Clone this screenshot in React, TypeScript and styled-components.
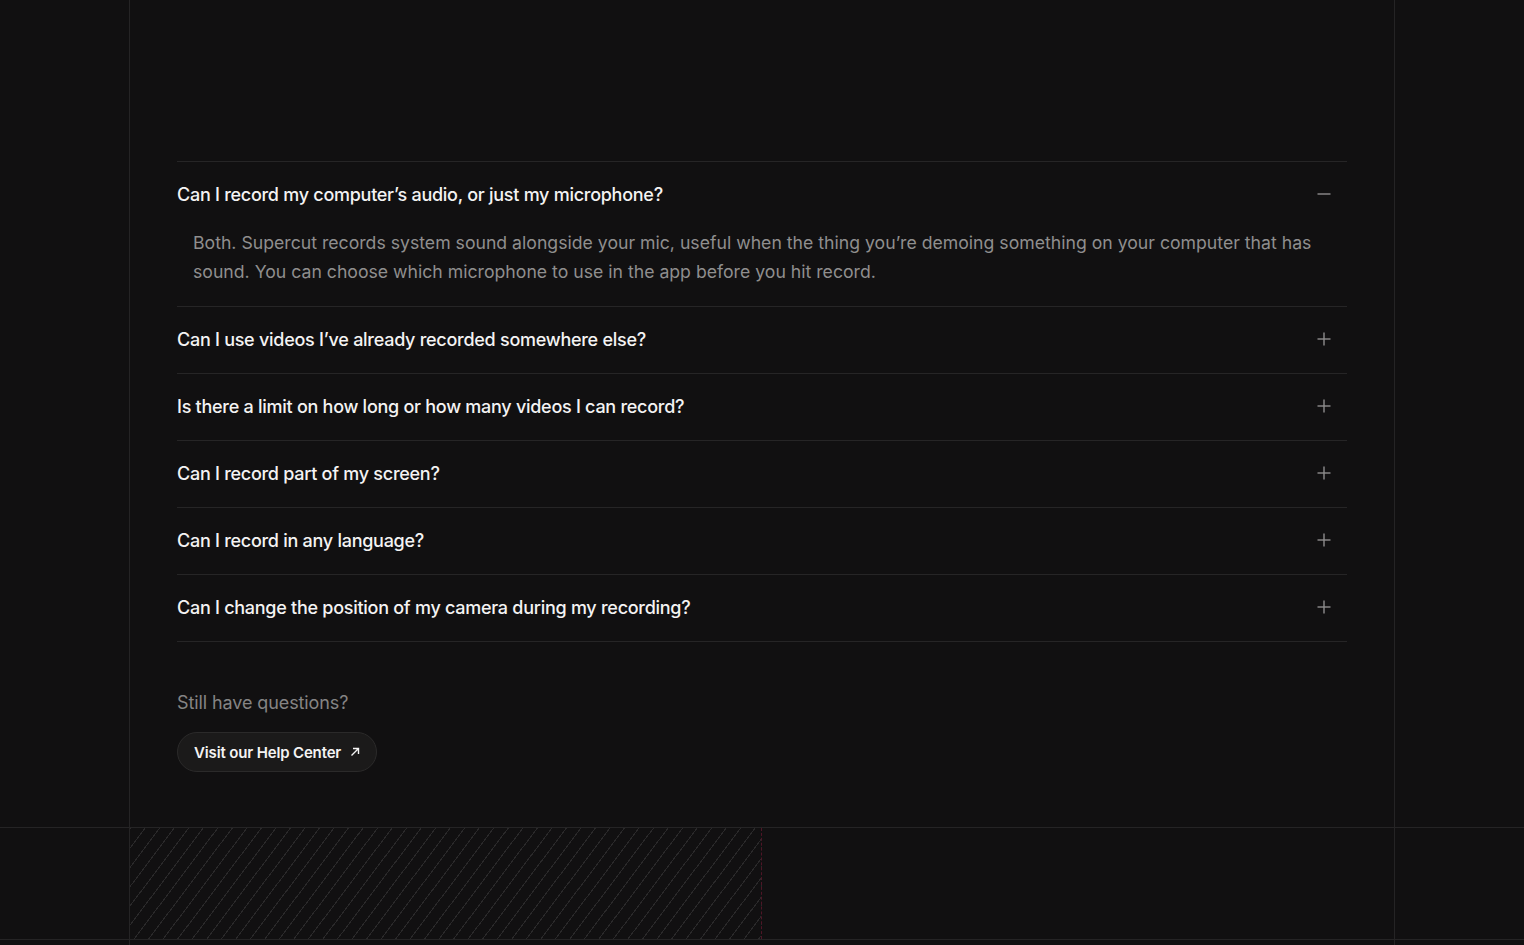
import styled, { createGlobalStyle } from "styled-components";

const faqs = [
  {
    q: "Can I record my computer’s audio, or just my microphone?",
    a: "Both. Supercut records system sound alongside your mic, useful when the thing you’re demoing something on your computer that has sound. You can choose which microphone to use in the app before you hit record.",
    open: true,
  },
  { q: "Can I use videos I’ve already recorded somewhere else?" },
  { q: "Is there a limit on how long or how many videos I can record?" },
  { q: "Can I record part of my screen?" },
  { q: "Can I record in any language?" },
  { q: "Can I change the position of my camera during my recording?" },
];

const GlobalStyle = createGlobalStyle`
  *, *::before, *::after {
    box-sizing: border-box;
  }
  html, body {
    margin: 0;
    background: #111011;
    font-family: Inter, "Noto Sans", sans-serif;
    -webkit-font-smoothing: antialiased;
  }
`;

const Page = styled.div`
  height: 945px;
  display: flex;
  flex-direction: column;
  overflow: hidden;
`;

const Band = styled.section`
  border-bottom: 1px solid #252425;
`;

const Frame = styled.div`
  width: 1266px;
  margin: 0 auto;
  border-left: 1px solid #252425;
  border-right: 1px solid #252425;
`;

const FaqFrame = styled(Frame)`
  padding: 161px 47px 55px;
`;

const List = styled.div`
  display: flex;
  flex-direction: column;
  border-top: 1px solid #262526;
`;

const Item = styled.div`
  border-bottom: 1px solid #262526;
`;

const Question = styled.button`
  width: 100%;
  height: 66px;
  display: flex;
  align-items: center;
  justify-content: space-between;
  padding: 0 16px 2px 0;
  background: none;
  border: 0;
  color: #f4f3f3;
  font-family: Inter, "Noto Sans", sans-serif;
  font-size: 18px;
  font-weight: 500;
  letter-spacing: -0.27px;
  text-align: left;
  cursor: pointer;
`;

const Answer = styled.p`
  margin: 0;
  padding: 0 24px 20px 16px;
  color: #8f8e8e;
  font-size: 17.66px;
  line-height: 29px;
  letter-spacing: 0;
`;

const Still = styled.p`
  margin: 49px 0 17px;
  color: #858484;
  font-size: 18px;
  line-height: 24px;
  letter-spacing: -0.1px;
`;

const HelpButton = styled.a`
  display: inline-flex;
  align-items: center;
  gap: 9px;
  height: 40px;
  padding: 0 16px;
  border: 1px solid #2b2a2a;
  border-radius: 20px;
  background: #1b1a1a;
  color: #f4f3f3;
  font-size: 15px;
  font-weight: 600;
  letter-spacing: -0.15px;
  text-decoration: none;
`;

const FooterFrame = styled(Frame)`
  height: 111px;
  display: grid;
  grid-template-columns: 1fr 1fr;
`;

const Hatch = styled.div`
  border-right: 1px dashed #4f1526;
  background: repeating-linear-gradient(
    127deg,
    #2a292a 0 1px,
    transparent 1px 11.6px
  );
`;

const Rest = styled.div`
  flex: 1;
  display: flex;
`;

const RestFrame = styled(Frame)`
  flex: none;
`;

const Icon = ({ open }: { open?: boolean }) => (
  <svg width="14" height="14" viewBox="0 0 14 14" fill="none">
    <path d="M0.5 7h13" stroke="#8e8d8d" strokeWidth="1.4" />
    {!open && <path d="M7 0.5v13" stroke="#8e8d8d" strokeWidth="1.4" />}
  </svg>
);

const Arrow = () => (
  <svg width="10" height="10" viewBox="0 0 10 10" fill="none">
    <path
      d="M1.5 8.5L8.5 1.5M3 1.5h5.5V7"
      stroke="#f4f3f3"
      strokeWidth="1.4"
    />
  </svg>
);

export default function App() {
  return (
    <Page>
      <GlobalStyle />
      <Band>
        <FaqFrame>
          <List>
            {faqs.map((f) => (
              <Item key={f.q}>
                <Question>
                  {f.q}
                  <Icon open={f.open} />
                </Question>
                {f.open && <Answer>{f.a}</Answer>}
              </Item>
            ))}
          </List>
          <Still>Still have questions?</Still>
          <HelpButton href="#">
            Visit our Help Center
            <Arrow />
          </HelpButton>
        </FaqFrame>
      </Band>
      <Band>
        <FooterFrame>
          <Hatch />
          <div />
        </FooterFrame>
      </Band>
      <Rest>
        <RestFrame />
      </Rest>
    </Page>
  );
}
